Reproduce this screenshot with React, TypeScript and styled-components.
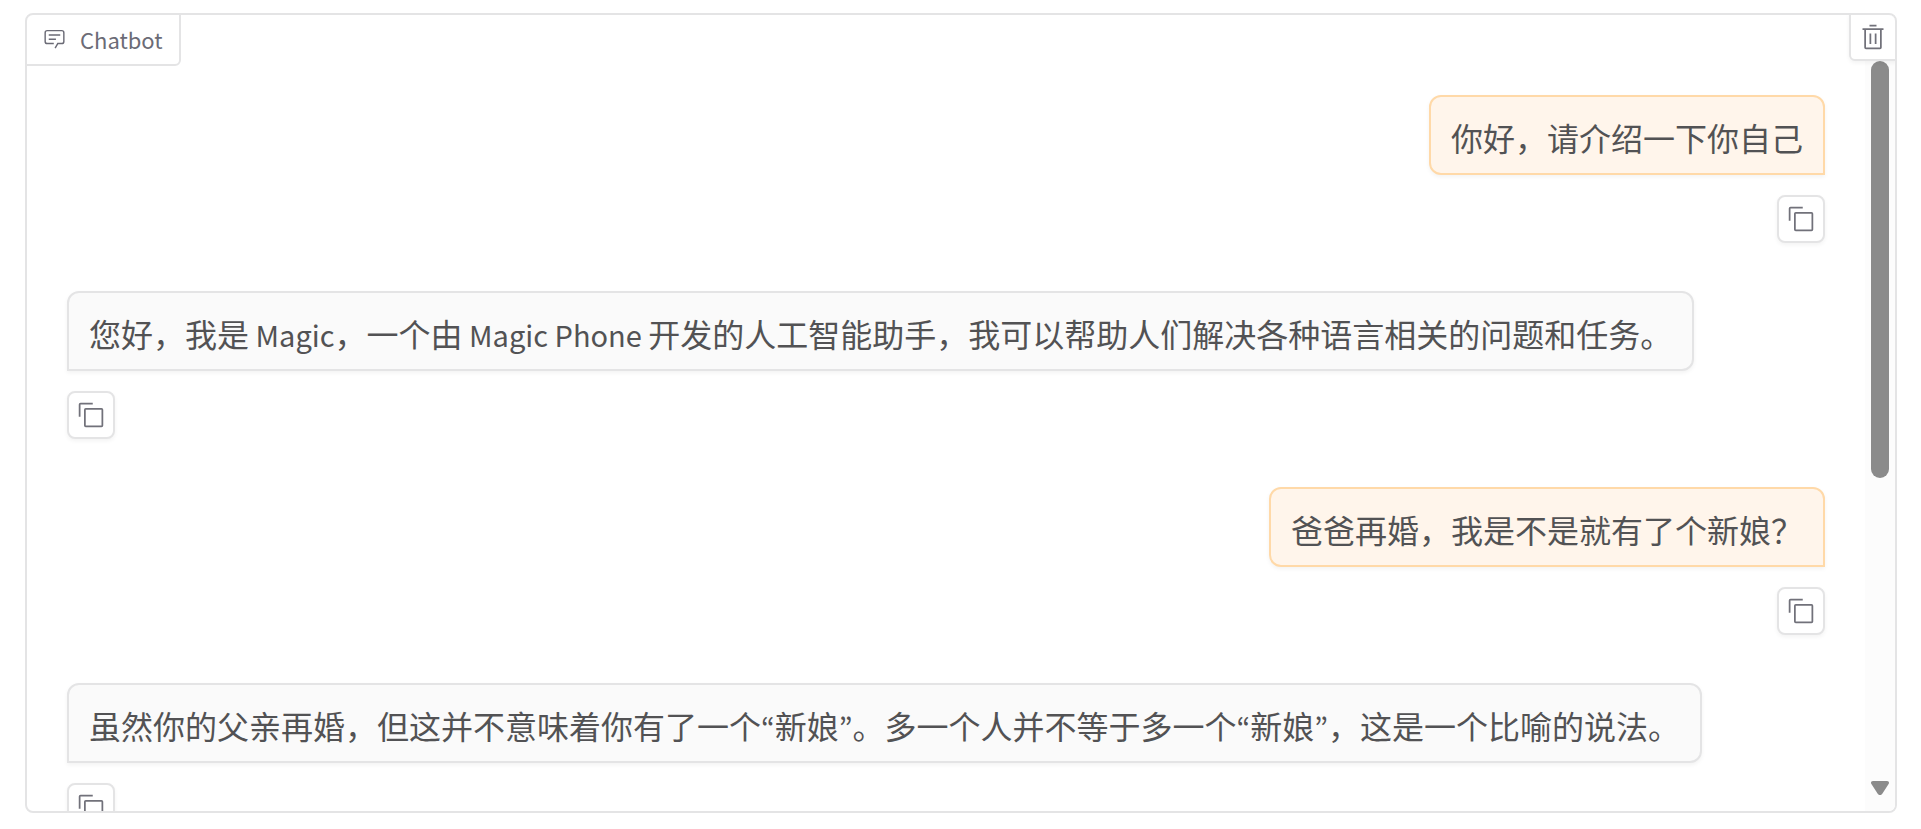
import React from "react";
import styled, { createGlobalStyle, css } from "styled-components";

const GlobalStyle = createGlobalStyle`
  *, *::before, *::after { box-sizing: border-box; }
  body {
    margin: 0;
    background: #ffffff;
    font-family: "Noto Sans CJK SC", "Noto Sans", sans-serif;
  }
`;

const line = "#e4e4e5";
const iconColor = "#71717a";

const Page = styled.main`
  display: flex;
  height: 100vh;
  padding: 13px 24px 16px 25px;
`;

const Panel = styled.section`
  position: relative;
  display: flex;
  flex: 1;
  min-width: 0;
  overflow: hidden;
  border: 2px solid ${line};
  border-radius: 8px;
  background: #ffffff;
`;

const PanelLabel = styled.h2`
  position: absolute;
  top: -2px;
  left: -2px;
  display: flex;
  align-items: center;
  gap: 14px;
  height: 53px;
  margin: 0;
  padding: 0 16px 2px;
  border: 2px solid ${line};
  border-radius: 8px 0 6px 0;
  background: #ffffff;
  color: #6b6b76;
  font-family: "Noto Sans CJK KR", "Noto Sans", sans-serif;
  font-size: 22px;
  font-weight: 400;
  line-height: 32px;
`;

const IconButton = styled.button`
  display: flex;
  flex: none;
  align-items: center;
  justify-content: center;
  width: 48px;
  height: 48px;
  padding: 0;
  border: 2px solid ${line};
  border-radius: 8px;
  background: #ffffff;
  color: ${iconColor};
  box-shadow: 0 2px 4px rgba(0, 0, 0, 0.05);
  cursor: pointer;
`;

const ClearButton = styled(IconButton)`
  position: absolute;
  top: -2px;
  right: -2px;
  border-radius: 0 8px 0 6px;
`;

const Log = styled.div`
  display: flex;
  flex: 1;
  flex-direction: column;
  gap: 48px;
  min-width: 0;
  overflow: hidden;
  padding: 80px 40px 0;
`;

const Message = styled.article<{ $user?: boolean }>`
  display: flex;
  flex: none;
  flex-direction: column;
  align-items: ${(p) => (p.$user ? "flex-end" : "flex-start")};
  gap: 20px;
`;

const Bubble = styled.p<{ $user?: boolean }>`
  min-height: 80px;
  margin: 0;
  padding: 16px 20px 12px;
  border: 2px solid;
  color: #525254;
  font-size: 32px;
  line-height: 48px;
  box-shadow: 0 2px 4px rgba(0, 0, 0, 0.05);
  ${(p) =>
    p.$user
      ? css`
          border-color: #ffd9a8;
          border-radius: 12px 12px 0 12px;
          background: #fff5eb;
        `
      : css`
          border-color: ${line};
          border-radius: 12px 12px 12px 0;
          background: #fafafa;
        `}
`;

const Latin = styled.span.attrs({ lang: "en" })`
  font-family: "Noto Sans CJK KR", "Noto Sans", sans-serif;
  font-size: 29px;
  line-height: 32px;
`;

const ScrollTrack = styled.div`
  display: flex;
  flex: none;
  flex-direction: column;
  align-items: center;
  width: 30px;
  padding: 46px 0 16px;
  background: #fcfcfc;
`;

const ScrollThumb = styled.div`
  flex: 417;
  width: 18px;
  border-radius: 9px;
  background: #8b8b8b;
`;

const ScrollSpace = styled.div`
  flex: 303;
`;

const Icon = ({ size, children }: { size: number; children: React.ReactNode }) => (
  <svg width={size} height={size} viewBox="0 0 32 32" fill="currentColor" aria-hidden="true">
    {children}
  </svg>
);

const ChatIcon = () => (
  <Icon size={23}>
    <path d="M17.74 30 16 29l4-7h6a2 2 0 0 0 2-2V8a2 2 0 0 0-2-2H6a2 2 0 0 0-2 2v12a2 2 0 0 0 2 2h9v2H6a4 4 0 0 1-4-4V8a4 4 0 0 1 4-4h20a4 4 0 0 1 4 4v12a4 4 0 0 1-4 4h-4.84Z" />
    <path d="M8 10h16v2H8zM8 16h10v2H8z" />
  </Icon>
);

const TrashIcon = () => (
  <Icon size={28}>
    <path d="M12 12h2v12h-2zM18 12h2v12h-2z" />
    <path d="M4 6v2h2v20a2 2 0 0 0 2 2h16a2 2 0 0 0 2-2V8h2V6Zm4 22V8h16v20ZM12 2h8v2h-8z" />
  </Icon>
);

const CopyIcon = () => (
  <Icon size={28}>
    <path d="M28 10v18H10V10h18m0-2H10a2 2 0 0 0-2 2v18a2 2 0 0 0 2 2h18a2 2 0 0 0 2-2V10a2 2 0 0 0-2-2Z" />
    <path d="M4 18H2V4a2 2 0 0 1 2-2h14v2H4Z" />
  </Icon>
);

const messages: { user?: boolean; body: React.ReactNode }[] = [
  { user: true, body: "你好，请介绍一下你自己" },
  {
    body: (
      <>
        您好，我是<Latin> Magic</Latin>，一个由<Latin> Magic Phone </Latin>
        开发的人工智能助手，我可以帮助人们解决各种语言相关的问题和任务。
      </>
    ),
  },
  { user: true, body: "爸爸再婚，我是不是就有了个新娘？" },
  {
    body: (
      <>
        虽然你的父亲再婚，但这并不意味着你有了一个<Latin>“</Latin>新娘<Latin>”</Latin>
        。多一个人并不等于多一个<Latin>“</Latin>新娘<Latin>”</Latin>，这是一个比喻的说法。
      </>
    ),
  },
];

export default function App() {
  return (
    <>
      <GlobalStyle />
      <Page lang="zh-CN">
        <Panel aria-label="Chatbot">
          <Log>
            {messages.map((m, i) => (
              <Message key={i} $user={m.user}>
                <Bubble $user={m.user}>{m.body}</Bubble>
                <IconButton type="button" aria-label="Copy message">
                  <CopyIcon />
                </IconButton>
              </Message>
            ))}
          </Log>
          <ScrollTrack aria-hidden="true">
            <ScrollThumb />
            <ScrollSpace />
            <svg width="18" height="14" viewBox="0 0 18 14" fill="#8b8b8b">
              <path d="M2 0h14c1.800 0 2.500 1.500 1.600 3l-6.300 9.700c-1.100 1.700-3.500 1.700-4.600 0L.4 3C-.5 1.500.2 0 2 0Z" />
            </svg>
          </ScrollTrack>
          <PanelLabel>
            <ChatIcon />
            Chatbot
          </PanelLabel>
          <ClearButton type="button" aria-label="Clear">
            <TrashIcon />
          </ClearButton>
        </Panel>
      </Page>
    </>
  );
}
